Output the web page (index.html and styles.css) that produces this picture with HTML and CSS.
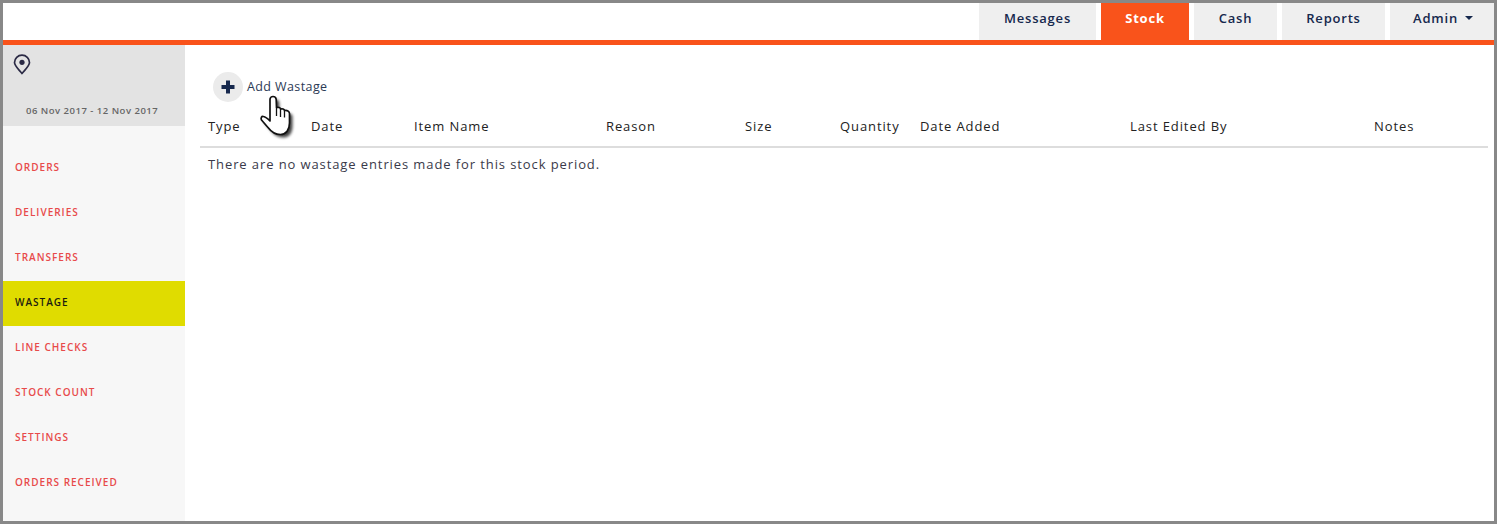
FILE: index.html
```html
<!DOCTYPE html>
<html lang="en">
<head>
<meta charset="utf-8">
<title>Wastage</title>
<link rel="stylesheet" href="styles.css">
</head>
<body>
<div class="frame">
  <header class="topbar">
    <nav class="tabs">
      <a class="tab tab-messages">Messages</a>
      <a class="tab tab-stock active">Stock</a>
      <a class="tab tab-cash">Cash</a>
      <a class="tab tab-reports">Reports</a>
      <a class="tab tab-admin">Admin <span class="caret"></span></a>
    </nav>
  </header>
  <div class="body">
    <aside class="sidebar">
      <div class="period">
        <svg class="pin" width="18" height="21" viewBox="0 0 18 21" fill="none">
          <path d="M9 19.5C5 14.8 1.5 11.8 1.5 8.6a7.5 7.5 0 0 1 15 0c0 3.200-3.500 6.200-7.500 10.900z" stroke="#2b2a45" stroke-width="1.700" stroke-linejoin="round"/>
          <circle cx="9" cy="8.300" r="2.600" fill="#2b2a45"/>
        </svg>
        <div class="dates">06 Nov 2017 - 12 Nov 2017</div>
      </div>
      <ul class="menu">
        <li>Orders</li>
        <li>Deliveries</li>
        <li>Transfers</li>
        <li class="current">Wastage</li>
        <li>Line Checks</li>
        <li>Stock Count</li>
        <li>Settings</li>
        <li>Orders Received</li>
      </ul>
    </aside>
    <main class="content">
      <div class="actions">
        <span class="add-circle">
          <svg width="14" height="14" viewBox="0 0 14 14"><path d="M5 0.500h4v4.500h4.500v4H9v4.500H5V9H0.500V5H5z" fill="#16284d"/></svg>
        </span>
        <a class="add-label">Add Wastage</a>
      </div>
      <table class="grid">
        <thead>
          <tr>
            <th class="c-type">Type</th>
            <th class="c-date">Date</th>
            <th class="c-item">Item Name</th>
            <th class="c-reason">Reason</th>
            <th class="c-size">Size</th>
            <th class="c-qty">Quantity</th>
            <th class="c-added">Date Added</th>
            <th class="c-edited">Last Edited By</th>
            <th>Notes</th>
          </tr>
        </thead>
        <tbody>
          <tr><td colspan="9">There are no wastage entries made for this stock period.</td></tr>
        </tbody>
      </table>
    </main>
  </div>
  <svg class="hand" width="46" height="50" viewBox="0 0 46 50">
    <defs>
      <filter id="hand-shadow" x="-30%" y="-30%" width="170%" height="170%">
        <feGaussianBlur stdDeviation="1.700"/>
      </filter>
    </defs>
    <path transform="translate(3 3)" filter="url(#hand-shadow)" fill="#000" opacity="0.750" d="M12 22V4.500C12 2.500 13.300 1.500 15 1.500S18 2.500 18.200 4.500L18.500 12.500C20.500 12 22.300 12.500 22.500 14C24.500 13.500 26.200 14 26.500 15.500C29 15 31.500 16 31.500 18.500V28C31.500 35 28 39.500 22.500 39.500C16.500 39.500 13 36.500 10 32.500L3.500 25C2.500 23 3.500 21 5.500 21.500C8 22 10 24 12 26Z"/>
    <path fill="#fff" stroke="#111" stroke-width="1.700" stroke-linejoin="round" d="M12 22V4.500C12 2.500 13.300 1.500 15 1.500S18 2.500 18.200 4.500L18.500 12.500C20.500 12 22.300 12.500 22.500 14C24.500 13.500 26.200 14 26.500 15.500C29 15 31.500 16 31.500 18.500V28C31.500 35 28 39.500 22.500 39.500C16.500 39.500 13 36.500 10 32.500L3.500 25C2.500 23 3.500 21 5.500 21.500C8 22 10 24 12 26Z"/>
    <path fill="none" stroke="#111" stroke-width="1.300" d="M18.500 12.500V21M22.500 14V22M26.500 15.500V22.500"/>
  </svg>
</div>
</body>
</html>
```
FILE: styles.css
```css
* { box-sizing: border-box; }
html, body { margin: 0; height: 100%; }
body { background: #fff; font-family: "Open Sans", "Noto Sans", sans-serif; }

.frame {
  position: relative;
  width: 1497px;
  height: 524px;
  border: 3px solid #888;
  display: flex;
  flex-direction: column;
  overflow: hidden;
}

.topbar {
  height: 42px;
  flex: none;
  border-bottom: 5px solid #f9531b;
  display: flex;
  justify-content: flex-end;
}
.tabs { display: flex; gap: 5px; }
.tab {
  display: flex;
  align-items: center;
  justify-content: center;
  height: 37px;
  padding-bottom: 7px;
  background: #efefef;
  color: #16284d;
  font-size: 13px;
  font-weight: 600;
  letter-spacing: 0.800px;
}
.tab-messages { width: 117px; }
.tab-stock { width: 88px; }
.tab-cash { width: 83px; }
.tab-reports { width: 103px; }
.tab-admin { width: 104px; gap: 4px; padding-left: 2px; }
.tab.active { background: #f9531b; color: #fff; font-weight: 700; }
.caret {
  width: 0;
  height: 0;
  margin-left: 3px;
  border-left: 4px solid transparent;
  border-right: 4px solid transparent;
  border-top: 4px solid #16284d;
}

.body { flex: 1; display: flex; min-height: 0; }

.sidebar { width: 182px; flex: none; background: #f7f7f7; }
.period { height: 81px; background: #e3e3e3; padding: 9px 0 0 10px; }
.pin { display: block; }
.dates {
  margin-top: 29px;
  margin-left: 13px;
  font-size: 9.500px;
  font-weight: 600;
  letter-spacing: 0.500px;
  color: #666;
  white-space: nowrap;
}
.menu { list-style: none; margin: 20px 0 0; padding: 0; }
.menu li {
  height: 45px;
  display: flex;
  align-items: center;
  padding: 0 0 4px 12px;
  font-size: 10px;
  font-weight: 600;
  letter-spacing: 1px;
  text-transform: uppercase;
  color: #e84a4a;
}
.menu li.current { background: #e0dc00; color: #1d1d10; }

.content { flex: 1; padding: 27px 6px 0 15px; min-width: 0; }
.actions { display: flex; align-items: center; gap: 4px; height: 30px; margin-left: 13px; }
.add-circle {
  width: 30px;
  height: 30px;
  border-radius: 50%;
  background: #ebebeb;
  display: flex;
  align-items: center;
  justify-content: center;
}
.add-label { font-size: 12.500px; letter-spacing: 0.400px; color: #2b3a55; padding-bottom: 2px; }

.grid { width: 100%; border-collapse: collapse; table-layout: fixed; margin-top: 8px; }
.grid th {
  height: 37px;
  padding: 0 0 4px 8px;
  text-align: left;
  font-size: 13px;
  font-weight: 500;
  letter-spacing: 0.900px;
  color: #222;
  border-bottom: 2px solid #ddd;
  white-space: nowrap;
}
.grid td {
  height: 34px;
  padding: 0 0 2px 8px;
  font-size: 13px;
  letter-spacing: 0.900px;
  color: #3a3a4a;
}
.c-type { width: 103px; }
.c-date { width: 103px; }
.c-item { width: 192px; }
.c-reason { width: 139px; }
.c-size { width: 95px; }
.c-qty { width: 80px; }
.c-added { width: 210px; }
.c-edited { width: 244px; }

.hand { position: absolute; left: 255px; top: 92px; }
```
